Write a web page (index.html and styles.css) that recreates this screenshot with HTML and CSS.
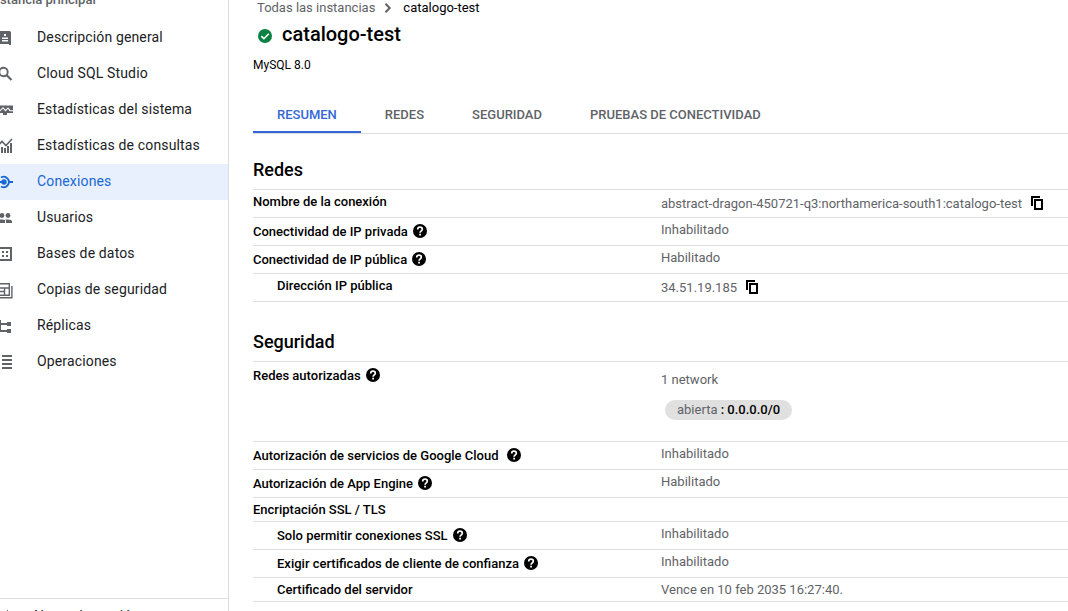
FILE: index.html
```html
<!DOCTYPE html>
<html lang="es">
<head>
<meta charset="utf-8">
<title>catalogo-test</title>
<link rel="stylesheet" href="styles.css">
</head>
<body>
<svg class="defs" aria-hidden="true">
  <symbol id="help" viewBox="0 0 14 14"><circle cx="7" cy="7" r="7"/><path d="M4.700 5.400C4.700 3.900 5.800 3.200 7 3.200s2.300.8 2.300 2c0 1.600-2.200 1.700-2.200 3.500" fill="none" stroke="#fff" stroke-width="1.700"/><path d="M6.200 9.800h1.800v1.700H6.200z" fill="#fff"/></symbol>
  <symbol id="copy" viewBox="0 0 12 14"><path d="M0 0h9v2H2v8H0z"/><path d="M3 3h9v11H3zm2 2v7h5V5z" fill-rule="evenodd"/></symbol>
</svg>
<div class="app">
  <aside class="sidebar">
    <div class="side-title">Instancia principal</div>
    <nav class="nav">
      <a class="item"><svg class="ico" viewBox="0 0 18 18"><path fill-rule="evenodd" d="M3.500 2h10q1.500 0 1.500 1.500V16h-2v-1H4v1H2V3.500Q2 2 3.500 2zM8 5v2h2V5zM6 8.500V10h6V8.500zM6 11v1.500h6V11z"/></svg><span>Descripción general</span></a>
      <a class="item"><svg class="ico" viewBox="0 0 18 18"><circle cx="7.500" cy="7" r="4.200" fill="none" stroke="currentColor" stroke-width="1.900"/><path d="M10.500 10l5 5" stroke="currentColor" stroke-width="2.100"/></svg><span>Cloud SQL Studio</span></a>
      <a class="item"><svg class="ico" viewBox="0 0 18 18"><path d="M1 4.500h16V12h-6v2H7v-2H1z"/><path d="M1 9.700h3l3-3 2.500 3L12 7l2 2.700h3" fill="none" stroke="#fff" stroke-width="1.100"/></svg><span>Estadísticas del sistema</span></a>
      <a class="item"><svg class="ico" viewBox="0 0 18 18"><path d="M2 12h2v4H2zM5 10h2v6H5zM8 11h2v5H8zM11 9h2v7h-2zM14 6h2v10h-2z"/><path d="M1 9.500l5-5 4 4 6-6.500" fill="none" stroke="currentColor" stroke-width="1.600"/></svg><span>Estadísticas de consultas</span></a>
      <a class="item active"><svg class="ico" viewBox="0 0 18 18"><circle cx="8" cy="9" r="2.700"/><path d="M0 8h8v2H0zM13 8h4v2h-4z"/><path d="M5 4.500A5.200 5.200 0 1 1 5 13.500" fill="none" stroke="currentColor" stroke-width="1.900"/></svg><span>Conexiones</span></a>
      <a class="item"><svg class="ico" viewBox="0 0 18 18"><circle cx="6" cy="6.500" r="2.400"/><circle cx="12" cy="6.500" r="2.400"/><path d="M1 14v-1.500Q1 10.500 6 10.500q2 0 3 .6V14zM10 14v-2q0-.8-.6-1.500H12q4 0 4 2V14z"/></svg><span>Usuarios</span></a>
      <a class="item"><svg class="ico" viewBox="0 0 18 18"><path fill-rule="evenodd" d="M2 2h14v14H2zm2 2v10h10V4z"/><path d="M6 6h2v2H6zM10 6h2v2h-2zM6 10h2v2H6zM10 10h2v2h-2z"/></svg><span>Bases de datos</span></a>
      <a class="item"><svg class="ico" viewBox="0 0 18 18"><path d="M1.700 2.700h11.600v11.600H1.700zM2 7h11.500M8.500 7v7M3 10.500h5.500M15.900 5v11.700H3" fill="none" stroke="currentColor" stroke-width="1.400"/></svg><span>Copias de seguridad</span></a>
      <a class="item"><svg class="ico" viewBox="0 0 18 18"><path d="M11 5h4v4h-4zM11 12h4v4h-4zM3 3h2v3h6v2H5v5h6v2H3z"/></svg><span>Réplicas</span></a>
      <a class="item"><svg class="ico" viewBox="0 0 18 18"><path d="M2 2h2v2H2zM6 2h10v2H6zM2 6h2v2H2zM6 6h10v2H6zM2 10h2v2H2zM6 10h10v2H6zM2 14h2v2H2zM6 14h10v2H6z"/></svg><span>Operaciones</span></a>
    </nav>
    <div class="side-foot"><svg class="ico" viewBox="0 0 18 18"><path d="M11 2h1v14h-1z"/></svg>Notas de versión</div>
  </aside>
  <main class="main">
    <div class="crumbs"><span>Todas las instancias</span><svg class="chev" viewBox="0 0 8 10"><path d="M1.500.8L5.700 5 1.500 9.200" fill="none" stroke="currentColor" stroke-width="2"/></svg><b>catalogo-test</b></div>
    <h1 class="title"><svg class="ok" viewBox="0 0 14 14"><circle cx="7" cy="7" r="7" fill="#0b8043"/><path d="M3.300 7.200L5.900 9.700l4.900-5" fill="none" stroke="#fff" stroke-width="1.600"/></svg><span>catalogo-test</span></h1>
    <div class="version">MySQL 8.0</div>
    <div class="tabs"><a class="tab on">RESUMEN</a><a class="tab">REDES</a><a class="tab">SEGURIDAD</a><a class="tab">PRUEBAS DE CONECTIVIDAD</a></div>
    <section class="block">
      <h2>Redes</h2>
      <div class="row"><b>Nombre de la conexión</b><span class="low">abstract-dragon-450721-q3:northamerica-south1:catalogo-test<svg class="copy"><use href="#copy"/></svg></span></div>
      <div class="row"><b class="low">Conectividad de IP privada<svg class="help"><use href="#help"/></svg></b><span>Inhabilitado</span></div>
      <div class="row"><b class="low">Conectividad de IP pública<svg class="help"><use href="#help"/></svg></b><span>Habilitado</span></div>
      <div class="row"><b class="sub">Dirección IP pública</b><span class="low">34.51.19.185<svg class="copy"><use href="#copy"/></svg></span></div>
    </section>
    <section class="block">
      <h2>Seguridad</h2>
      <div class="row tall"><b class="low">Redes autorizadas<svg class="help"><use href="#help"/></svg></b><div class="nets"><span>1 network</span><span class="chip">abierta <b>: 0.0.0.0/0</b></span></div></div>
      <div class="row"><b class="low">Autorización de servicios de Google Cloud<svg class="help wide"><use href="#help"/></svg></b><span>Inhabilitado</span></div>
      <div class="row"><b class="low">Autorización de App Engine<svg class="help"><use href="#help"/></svg></b><span>Habilitado</span></div>
      <div class="row short"><b>Encriptación SSL / TLS</b></div>
      <div class="row"><b class="low sub">Solo permitir conexiones SSL<svg class="help"><use href="#help"/></svg></b><span>Inhabilitado</span></div>
      <div class="row"><b class="low sub">Exigir certificados de cliente de confianza<svg class="help"><use href="#help"/></svg></b><span>Inhabilitado</span></div>
      <div class="row short"><b class="sub">Certificado del servidor</b><span>Vence en 10 feb 2035 16:27:40.</span></div>
    </section>
  </main>
</div>
</body>
</html>
```
FILE: styles.css
```css
* { box-sizing: border-box; }
body { margin: 0; font: 13px/20px Roboto, sans-serif; color: #000; background: #fff; overflow: hidden; }
b { font-weight: 500; }
svg { flex: none; fill: currentColor; }
.defs { display: none; }
.app { display: flex; height: 611px; overflow: hidden; }
.sidebar { width: 229px; flex: none; display: flex; flex-direction: column; border-right: 1px solid #dadce0; overflow: hidden; }
.side-title { height: 20px; margin: -10px 0 10px -11px; font-weight: 500; color: #5f6368; white-space: nowrap; }
.nav { flex: 1; }
.item { display: flex; align-items: center; height: 36px; gap: 23px; font-size: 14px; letter-spacing: .15px; color: #202124; }
.item span { padding-bottom: 2px; }
.ico { width: 18px; height: 18px; margin-left: -4px; color: #5f6368; }
.active { background: #e8f0fe; color: #1967d2; }
.active .ico { color: #1967d2; }
.side-foot { height: 13px; flex: none; border-top: 1px solid #dadce0; padding-top: 7px; display: flex; gap: 20px; font-size: 14px; color: #202124; overflow: hidden; }
.side-foot .ico { margin-top: 2px; }
.main { flex: 1; padding-left: 24px; min-width: 0; }
.crumbs { display: flex; align-items: center; height: 20px; margin-top: -2px; padding-left: 4px; color: #5f6368; }
.crumbs b { font-weight: 400; color: #000; }
.chev { width: 8px; height: 10px; margin: 0 11px 0 9px; }
.title { display: flex; align-items: center; height: 28px; margin: 2px 0 0; padding-left: 5px; gap: 10px; font-size: 20px; font-weight: 500; }
.ok { width: 14px; height: 14px; margin-top: 4px; }
.version { margin-top: 7px; font-size: 12px; }
.tabs { display: flex; height: 38px; margin-top: 21px; border-bottom: 1px solid #dadce0; }
.tab { padding: 9px 24px 0; height: 37px; font-weight: 500; color: #5f6368; }
.on { color: #3367d6; border-bottom: 2px solid #3367d6; }
.block h2 { margin: 0; height: 55px; padding-top: 24px; font-size: 18px; font-weight: 500; line-height: 24px; }
.block + .block h2 { height: 60px; padding-top: 29px; }
.row { display: grid; grid-template-columns: 408px 1fr; height: 28px; border-top: 1px solid #e0e0e0; }
.row:last-child { box-shadow: 0 1px #e0e0e0; }
.row > span, .nets { color: #5f6368; }
.row > * { padding-top: 2px; }
.row > .low { display: flex; padding-top: 4px; }
.row > .sub { padding-left: 24px; }
.short { height: 24px; }
.tall { height: 80px; }
.help { width: 14px; height: 14px; margin: 2px 0 0 5px; }
.help.wide { margin-left: 8px; }
.copy { width: 12px; height: 14px; margin: 2px 0 0 9px; color: #000; }
.row > .nets { display: flex; flex-direction: column; align-items: flex-start; padding-top: 8px; gap: 10px; }
.chip { height: 20px; margin-left: 4px; padding: 0 12px; border-radius: 10px; background: #e0e0e0; }
.chip b { color: #000; }
```
